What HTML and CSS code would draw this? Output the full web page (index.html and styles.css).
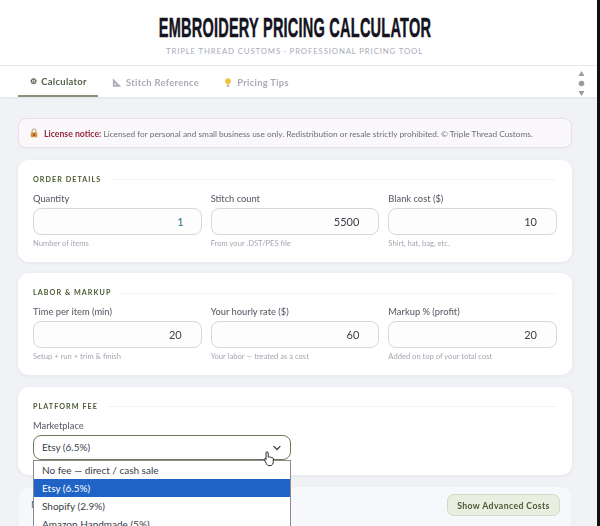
FILE: index.html
```html
<!DOCTYPE html>
<html lang="en">
<head>
<meta charset="utf-8">
<title>Embroidery Pricing Calculator</title>
<link rel="stylesheet" href="styles.css">
</head>
<body>
<div class="shell">
  <main class="app">
    <header class="head">
      <h1 class="title"><span class="title-t">EMBROIDERY PRICING CALCULATOR</span></h1>
      <p class="subtitle">TRIPLE THREAD CUSTOMS · PROFESSIONAL PRICING TOOL</p>
    </header>
    <nav class="tabs">
      <a class="tab tab-on"><span class="tab-ico">⚙</span>Calculator</a>
      <a class="tab tab-2"><svg class="tab-svg" viewBox="0 0 12 12"><path d="M1 1v10h10z M3 6.5V9h2.5z" fill="#a9adb8" fill-rule="evenodd"/></svg>Stitch Reference</a>
      <a class="tab tab-3"><svg class="tab-svg" viewBox="0 0 12 12"><path d="M6 .8a3.6 3.6 0 0 0-2.1 6.5c.5.4.6.8.6 1.2h3c0-.4.1-.8.6-1.2A3.6 3.6 0 0 0 6 .8z" fill="#f2c23e"/><path d="M4.6 9.2h2.8v1.8H4.6z" fill="#9a9aa0"/></svg>Pricing Tips</a>
      <div class="scroller">
        <svg viewBox="0 0 7 26" class="scroller-svg"><path d="M3.5 1L6.5 6H.5z M.5 21h6l-3 5z" fill="#9a9ca2"/><circle cx="3.5" cy="13.5" r="2.8" fill="#9a9ca2"/></svg>
      </div>
    </nav>
    <div class="content">
      <div class="notice"><span class="lock"><svg viewBox="0 0 10 12" class="lock-svg"><path d="M2.5 5V3.4a2.5 2.5 0 0 1 5 0V5" fill="none" stroke="#b39a7e" stroke-width="1.2"/><rect x="1" y="5" width="8" height="6.4" rx="1" fill="#d9903a"/><rect x="4.2" y="7" width="1.6" height="2.6" fill="#7a3d1d"/></svg></span><span class="notice-t"><b class="notice-b">License notice:</b> Licensed for personal and small business use only. Redistribution or resale strictly prohibited. © Triple Thread Customs.</span></div>

      <section class="card">
        <h2 class="sec">ORDER DETAILS</h2>
        <div class="row3">
          <div class="field"><label class="lbl">Quantity</label><div class="inp inp-blue">1</div><small class="hint">Number of items</small></div>
          <div class="field"><label class="lbl">Stitch count</label><div class="inp">5500</div><small class="hint">From your .DST/PES file</small></div>
          <div class="field"><label class="lbl">Blank cost ($)</label><div class="inp">10</div><small class="hint">Shirt, hat, bag, etc.</small></div>
        </div>
      </section>

      <section class="card">
        <h2 class="sec">LABOR &amp; MARKUP</h2>
        <div class="row3">
          <div class="field"><label class="lbl">Time per item (min)</label><div class="inp">20</div><small class="hint">Setup + run + trim &amp; finish</small></div>
          <div class="field"><label class="lbl">Your hourly rate ($)</label><div class="inp">60</div><small class="hint">Your labor — treated as a cost</small></div>
          <div class="field"><label class="lbl">Markup % (profit)</label><div class="inp">20</div><small class="hint">Added on top of your total cost</small></div>
        </div>
      </section>

      <section class="card card-fee">
        <h2 class="sec">PLATFORM FEE</h2>
        <label class="lbl">Marketplace</label>
        <div class="select">Etsy (6.5%)
          <svg class="chev" viewBox="0 0 12 8"><path d="M1.5 1.5L6 6l4.5-4.5" fill="none" stroke="#3d4148" stroke-width="1.8"/></svg>
        </div>
        <svg class="cursor" viewBox="0 0 16 20"><path d="M5 1.2c.9 0 1.4.6 1.4 1.4v5.2c.3-.6 1.9-.7 2.2.2.4-.5 1.9-.5 2.1.5.5-.4 1.9-.2 2 .9v3.6c0 2.6-1.3 5.2-4.2 5.2H7.4c-1.6 0-2.4-1-3.2-2.4L1.6 11c-.5-1 .7-2 1.7-1.1l.4.7V2.6c0-.8.5-1.4 1.3-1.4z" fill="#fff" stroke="#222" stroke-width="1.2"/></svg>
        <ul class="menu">
          <li class="opt">No fee — direct / cash sale</li>
          <li class="opt opt-on">Etsy (6.5%)</li>
          <li class="opt">Shopify (2.9%)</li>
          <li class="opt">Amazon Handmade (5%)</li>
        </ul>
      </section>

      <section class="card-adv">
        <span class="adv-t">Need more detail?</span>
        <button class="adv-btn">Show Advanced Costs</button>
      </section>
    </div>
  </main>
  <div class="edge"></div>
</div>
</body>
</html>
```
FILE: styles.css
```css
* { box-sizing: border-box; }
html, body { margin: 0; height: 526px; overflow: hidden; }
body { font-family: "Lato", "Noto Sans", sans-serif; color: #3c4048; background: #fff; }
.shell { display: flex; height: 526px; overflow: hidden; }
.app { width: 597px; flex: none; background: #f1f2f6; filter: blur(.3px); }
.edge { flex: 1; background: #111; }

.head { height: 66px; background: #fff; border-bottom: 1px solid #e8e9ed; text-align: center; padding: 14px 8px 0 0; }
.title { margin: 0; font-family: "Liberation Sans", sans-serif; font-weight: 700; font-size: 28px; line-height: 28px; color: #14141f; white-space: nowrap; }
.title-t { display: inline-block; transform: scaleX(.52); -webkit-text-stroke: .5px #14141f; letter-spacing: .4px; }
.subtitle { margin: 3px 0 0; font-size: 7.8px; line-height: 12px; letter-spacing: .86px; color: #a8abb6; }

.tabs { position: relative; display: flex; height: 31px; background: #fff; padding-left: 18px; box-shadow: 0 1px 2px rgba(30,30,50,.08); }
.tab { display: flex; align-items: center; gap: 4px; height: 31px; padding-top: 1px; font-size: 9.4px; font-weight: 700; letter-spacing: .3px; color: #a9acb6; }
.tab-on { color: #55604a; border-bottom: 2px solid #8a9079; width: 80px; padding-left: 12px; }
.tab-2 { margin-left: 14px; }
.tab-3 { margin-left: 24px; }
.tab-ico { font-size: 8px; }
.tab-svg { width: 10px; height: 11px; }
.scroller { position: absolute; right: 12px; top: 4px; width: 7px; height: 26px; }
.scroller-svg { display: block; width: 7px; height: 26px; }

.content { padding: 21px 25px 0 18px; display: flex; flex-direction: column; gap: 11.5px; }
.notice { height: 30px; border: 1px solid #ecdfe3; border-radius: 8px; background: #fbf8fb; display: flex; align-items: center; padding-left: 11px; font-size: 8.3px; color: #6b6e78; box-shadow: 0 1px 2px rgba(30,30,50,.03); }
.lock { margin-right: 6px; display: flex; }
.lock-svg { width: 8px; height: 10px; }
.notice-b { color: #93283e; font-weight: 700; font-size: 8.7px; }

.card { position: relative; height: 102px; background: #fff; border-radius: 11px; padding: 15px 15px 0; box-shadow: 0 1px 4px rgba(30,30,60,.06); }
.card-fee { height: 88px; }
.sec { margin: 0 0 7px; display: flex; align-items: center; gap: 9px; font-size: 7.2px; line-height: 10px; font-weight: 700; letter-spacing: 1.05px; color: #4c5a30; }
.sec::after { content: ""; flex: 1; height: 1px; background: #f3f4f6; }
.row3 { display: grid; grid-template-columns: repeat(3, 1fr); gap: 9px; }
.field { display: flex; flex-direction: column; min-width: 0; }
.lbl { display: block; font-size: 9.3px; line-height: 14px; font-weight: 500; color: #5c5f6a; margin-bottom: 2px; }
.inp { height: 27px; border: 1px solid #d6d8dc; border-radius: 8px; background: #fdfdfe; text-align: right; padding-right: 19px; font-size: 11px; line-height: 25px; font-weight: 400; color: #3c4048; }
.inp-blue { color: #2d6e86; padding-right: 17px; }
.hint { margin-top: 3px; font-size: 7.6px; line-height: 10px; color: #a4a7b0; }

.select { position: relative; width: 258px; height: 25px; border: 1px solid #6e7a58; border-radius: 8px; background: #fff; padding-left: 8px; font-size: 10px; line-height: 23px; color: #3c4048; }
.chev { position: absolute; right: 8px; top: 9px; width: 10px; height: 6px; }
.cursor { position: absolute; left: 245px; top: 63px; width: 13px; height: 18px; z-index: 3; }
.menu { position: absolute; left: 15px; top: 73px; width: 258px; height: 90px; margin: 0; padding: 0; list-style: none; background: #fff; border: 1px solid #8b8b8f; z-index: 2; }
.opt { height: 18px; padding-left: 8px; font-size: 10px; line-height: 18px; color: #3a3d45; white-space: nowrap; }
.opt-on { background: #1f63c6; color: #fff; }

.card-adv { height: 60px; background: #f7f8fb; border: 1px solid #eef0f3; border-radius: 11px; padding: 7px 11px 0 12px; display: flex; justify-content: space-between; align-items: flex-start; }
.adv-t { font-size: 9.6px; line-height: 22px; color: #5c5f6a; }
.adv-btn { height: 22px; width: 113px; padding: 0; border: 1px solid #d3dbc4; border-radius: 7px; background: #e9eee0; font-family: inherit; font-size: 8.7px; font-weight: 700; letter-spacing: .4px; color: #4b5a38; }
```
